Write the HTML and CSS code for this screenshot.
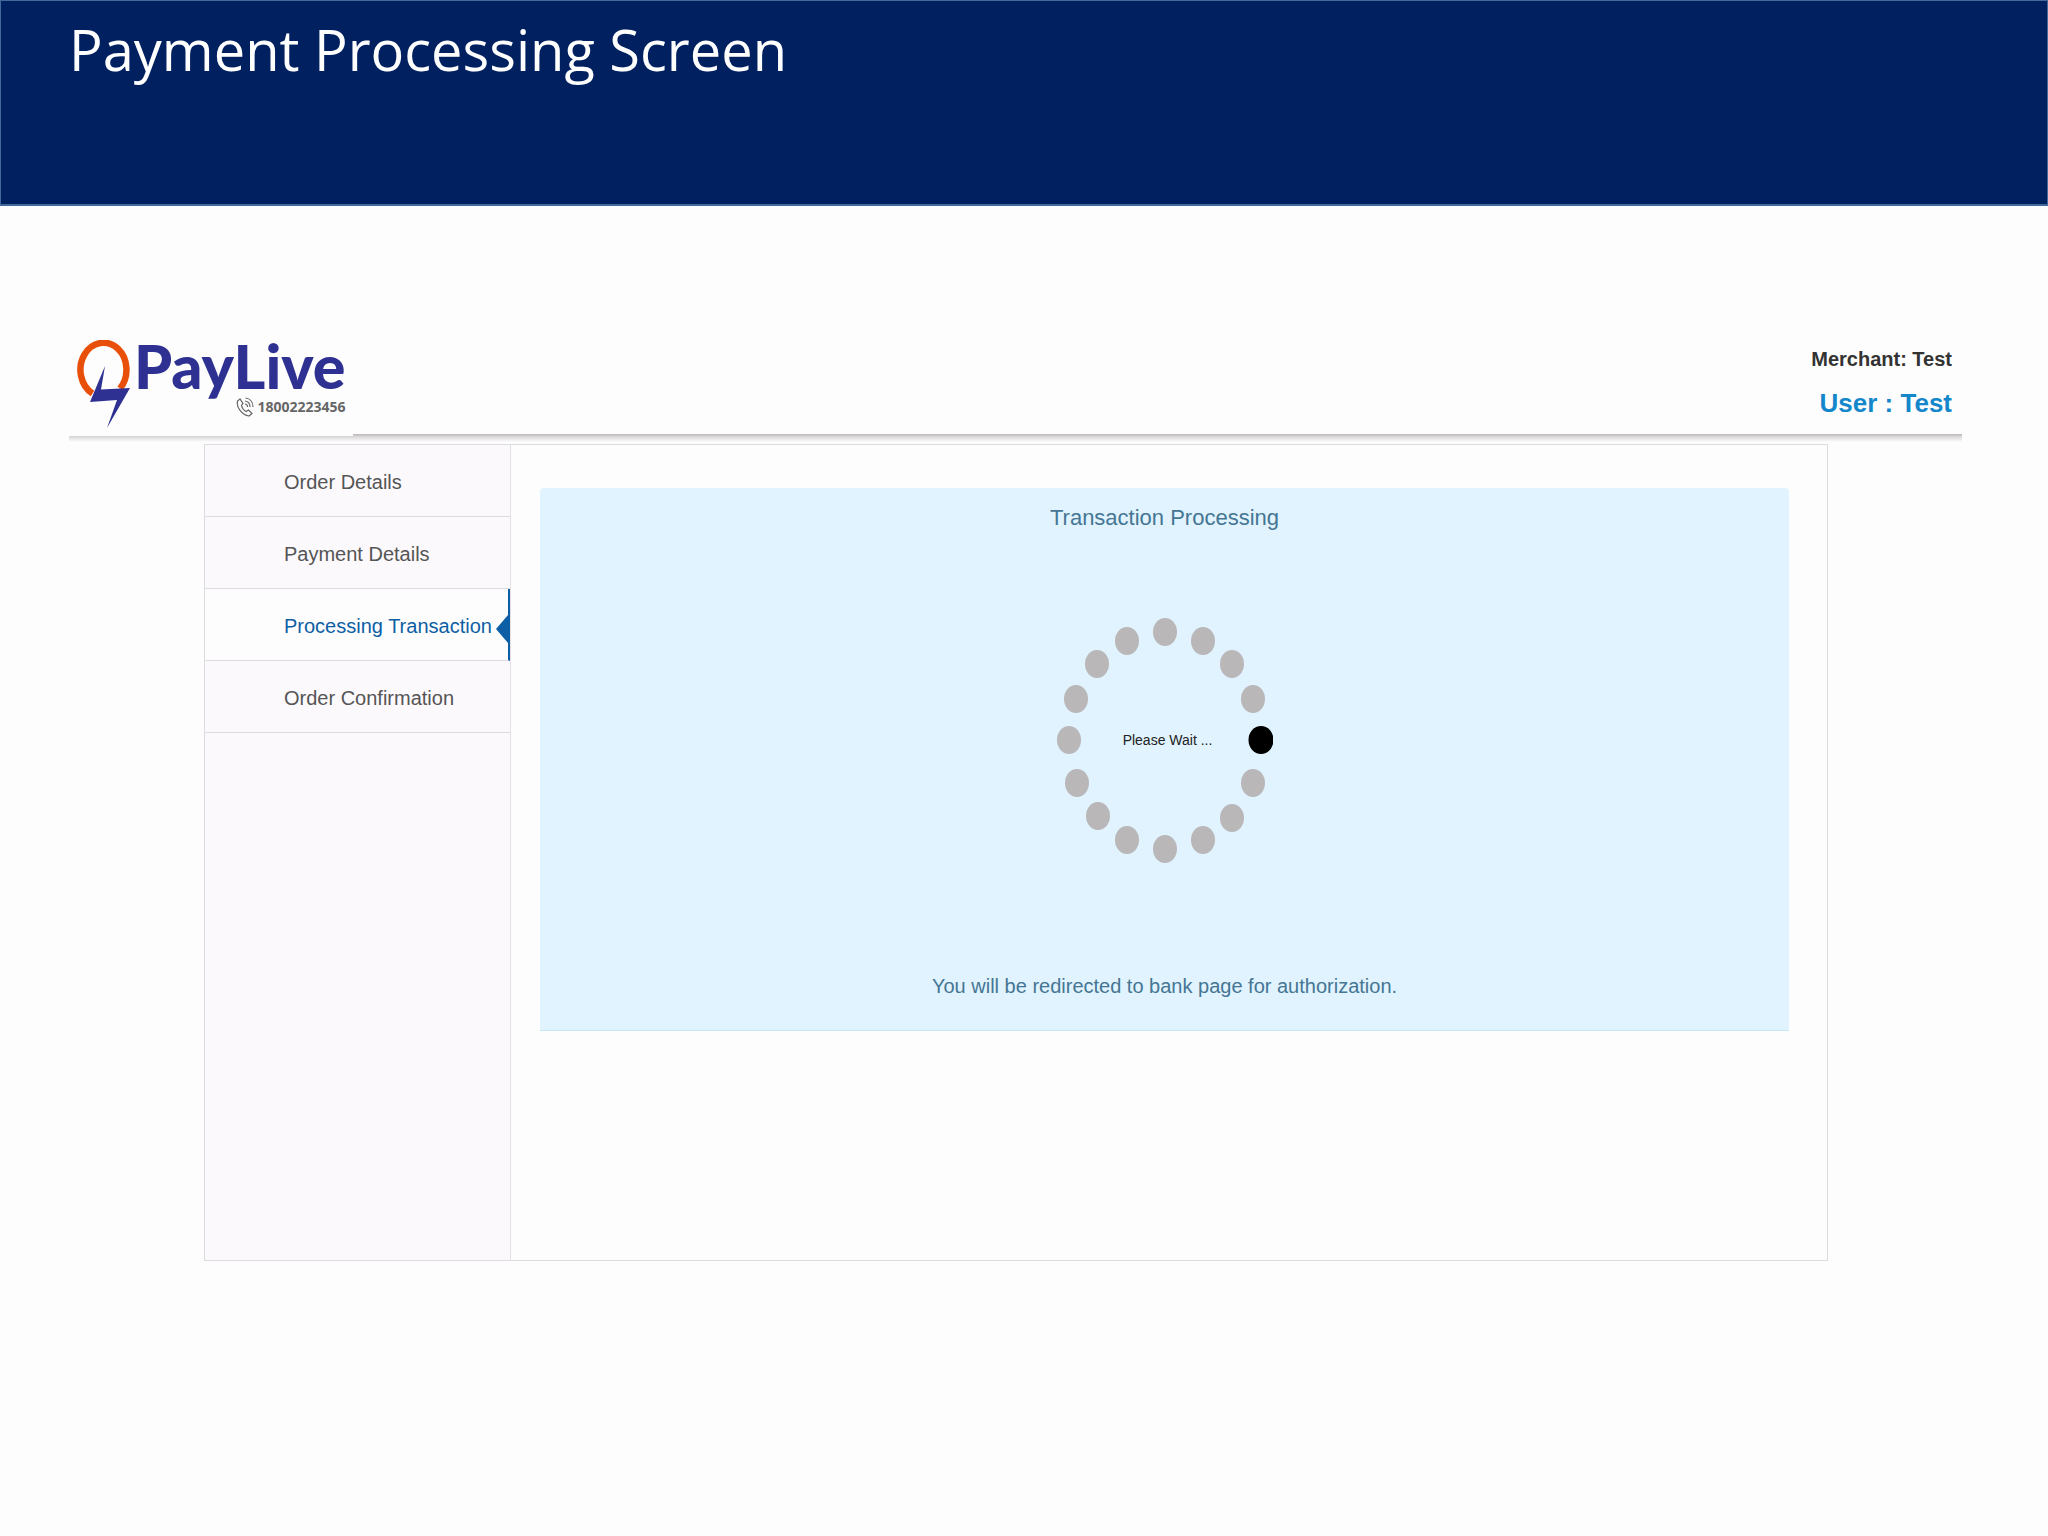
FILE: index.html
```html
<!DOCTYPE html>
<html lang="en">

<head>
  <meta charset="UTF-8">
  <meta name="viewport" content="width=device-width, initial-scale=1.0">
  <title>Payment Processing Screen</title>
  <link rel="stylesheet" href="styles.css">
</head>

<body>
  <div class="banner">
    <h1>Payment Processing Screen</h1>
  </div>

  <header class="header">
    <div class="logo">
      <svg class="logo-mark" width="54" height="88" viewBox="0 0 54 88" aria-hidden="true">
        <path d="M16.500 53.500 A23 27 0 1 1 44 48.500" fill="none" stroke="#e8500a" stroke-width="6.500" />
        <path d="M29 26 L25 49.500 L54 48 L31 88 L41 60 L14 62 Z" fill="#2e3192" />
      </svg>
      <div class="logo-text">
        <span class="logo-name">PayLive</span>
        <span class="logo-phone">
          <svg width="18" height="20" viewBox="0 0 18 20" fill="none" stroke="#666" stroke-width="1.200" aria-hidden="true">
            <path d="M4 2 L1.500 4 C0 10 6 18 13 19 L16 16.500 L12.500 13 L10 14.500 C8 13.500 6 11 5.500 8.500 L7 6.500 Z" />
            <path d="M9 4 C12 4.500 14 7 14 10 M9.500 1 C14 1.500 17 5 17 10 M9 7 C10.500 7 11.500 8.500 11.500 10" />
          </svg>
          18002223456
        </span>
      </div>
    </div>
    <div class="account">
      <p class="merchant">Merchant: Test</p>
      <p class="user">User : Test</p>
    </div>
  </header>
  <div class="header-shadow"></div>

  <div class="container">
    <nav class="sidebar">
      <ul class="steps">
        <li>Order Details</li>
        <li>Payment Details</li>
        <li class="active" aria-current="step">Processing Transaction</li>
        <li>Order Confirmation</li>
      </ul>
    </nav>

    <main class="content">
      <div class="alert">
        <h2>Transaction Processing</h2>
        <div class="loader">
          <svg width="216" height="246" viewBox="-108 -123 216 246" fill="#b9b7b8" aria-hidden="true">
            <ellipse cx="0" cy="-108" rx="12" ry="14" />
            <ellipse cx="38" cy="-99" rx="12" ry="14" />
            <ellipse cx="67" cy="-76" rx="12" ry="14" />
            <ellipse cx="88" cy="-41" rx="12" ry="14" />
            <ellipse cx="96" cy="0" rx="12.500" ry="14" fill="#000" />
            <ellipse cx="88" cy="43" rx="12" ry="14" />
            <ellipse cx="67" cy="78" rx="12" ry="14" />
            <ellipse cx="38" cy="100" rx="12" ry="14" />
            <ellipse cx="0" cy="109" rx="12" ry="14" />
            <ellipse cx="-38" cy="100" rx="12" ry="14" />
            <ellipse cx="-67" cy="76" rx="12" ry="14" />
            <ellipse cx="-88" cy="43" rx="12" ry="14" />
            <ellipse cx="-96" cy="0" rx="12" ry="14" />
            <ellipse cx="-89" cy="-41" rx="12" ry="14" />
            <ellipse cx="-68" cy="-76" rx="12" ry="14" />
            <ellipse cx="-38" cy="-99" rx="12" ry="14" />
          </svg>
          <span class="wait">Please Wait ...</span>
        </div>
        <p>You will be redirected to bank page for authorization.</p>
      </div>
    </main>
  </div>
</body>

</html>
```
FILE: styles.css
```css
* {
  box-sizing: border-box;
}

body {
  margin: 0;
  font-family: "Liberation Sans", Arial, sans-serif;
  font-size: 20px;
  background-color: #fdfdfd;
}

h1,
h2,
p {
  margin: 0;
  font-weight: normal;
}

.banner {
  min-height: 206px;
  padding: 12px 68px;
  background-color: #002060;
  border: 1px solid #41699c;
  border-bottom-width: 2px;
}

.banner h1 {
  font-family: "Open Sans", sans-serif;
  font-size: 56px;
  line-height: 72px;
  color: #fff;
}

.header {
  display: flex;
  justify-content: space-between;
  align-items: flex-start;
  margin: 132px 86px 0 69px;
  min-height: 96px;
}

.header-shadow {
  height: 8px;
  margin: 0 86px 0 69px;
  background: linear-gradient(#bbb8ba, #dedcde 40%, #fdfdfd);
}

/* taller than the bar so it covers the start of the shadow */
.logo {
  position: relative;
  display: flex;
  width: 284px;
  height: 98px;
  margin-bottom: -2px;
  padding-left: 7px;
  background-color: #fdfdfd;
}

.logo-mark {
  margin-top: 2px;
}

.logo-text {
  display: flex;
  flex-direction: column;
  margin-left: 4px;
}

.logo-name {
  font-family: Lato, sans-serif;
  font-size: 61px;
  font-weight: 900;
  line-height: 56px;
  color: #2e3192;
}

.logo-phone {
  display: flex;
  align-items: center;
  justify-content: flex-end;
  gap: 3px;
  height: 16px;
  margin-top: 5px;
  font-family: "Open Sans", sans-serif;
  font-size: 14px;
  font-weight: bold;
  line-height: 16px;
  color: #666;
}

.account {
  padding: 9px 10px 0 0;
  text-align: right;
}

.account p {
  font-weight: bold;
}

.merchant {
  line-height: 24px;
  color: #333;
}

.user {
  margin-top: 16px;
  font-size: 26px;
  line-height: 32px;
  color: #1487cb;
}

.container {
  display: flex;
  min-height: 817px;
  margin: 2px 220px 0 204px;
  border: 1px solid #dddbdf;
}

.sidebar {
  flex: 0 0 306px;
  background-color: #fbf9fc;
  border-right: 1px solid #e3e1e5;
}

.steps {
  margin: 0;
  padding: 0;
  list-style: none;
}

.steps li {
  position: relative;
  height: 72px;
  padding-left: 79px;
  line-height: 74px;
  white-space: nowrap;
  color: #555;
  border-bottom: 1px solid #dddbdf;
}

.steps .active {
  color: #0d5fa5;
  background-color: #fdfdfd;
  border-right: 2px solid #0d5fa5;
}

/* arrow on the current step */
.steps .active::after {
  content: "";
  position: absolute;
  top: 26px;
  right: 0;
  border: 14px solid transparent;
  border-left-width: 0;
  border-right: 12px solid #0d5fa5;
}

.content {
  flex: 1;
  padding: 43px 38px 0 29px;
}

.alert {
  display: flex;
  flex-direction: column;
  align-items: center;
  min-height: 543px;
  padding: 14px;
  color: #457694;
  background-color: #e0f3fe;
  border-bottom: 1px solid #c5e6f2;
  border-radius: 4px 4px 0 0;
}

.alert h2 {
  font-size: 22px;
  line-height: 32px;
}

.loader {
  display: grid;
  place-items: center;
  margin: 83px 0 109px;
}

.loader svg,
.wait {
  grid-area: 1 / 1;
}

.wait {
  padding-left: 6px;
  font-size: 14px;
  color: #222;
}

.alert p {
  line-height: 28px;
}
```
